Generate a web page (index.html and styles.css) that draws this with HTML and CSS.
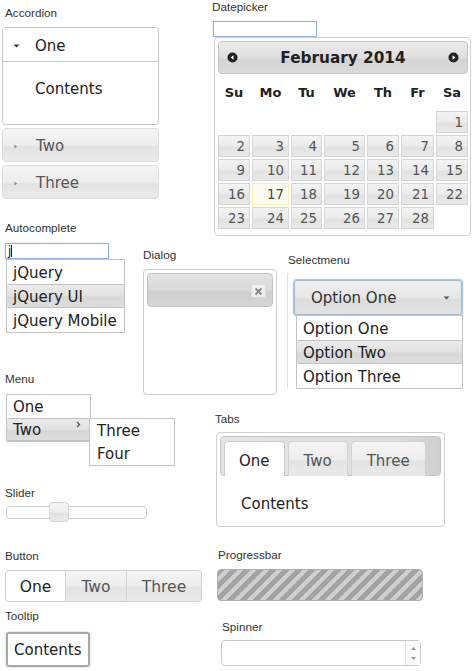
FILE: index.html
```html
<!DOCTYPE html>
<html>
<head>
<meta charset="utf-8">
<link rel="stylesheet" href="styles.css">
</head>
<body>
<div class="page">
  <div class="col-left">
    <section class="sec-accordion">
      <div class="label">Accordion</div>
      <div class="accordion">
        <div class="acc-open">
          <div class="acc-head acc-active"><span class="acc-icon"><svg width="7" height="4" viewBox="0 0 7 4"><path d="M0.5 0.5h6L3.5 3.5z" fill="#333"/></svg></span>One</div>
          <div class="acc-body">Contents</div>
        </div>
        <div class="acc-head acc-closed state-default"><span class="acc-icon"><svg width="7" height="7" viewBox="0 0 7 7"><path d="M2.5 1.5v4l2.5-2z" fill="#888"/></svg></span>Two</div>
        <div class="acc-head acc-closed state-default"><span class="acc-icon"><svg width="7" height="7" viewBox="0 0 7 7"><path d="M2.5 1.5v4l2.5-2z" fill="#888"/></svg></span>Three</div>
      </div>
    </section>

    <div class="row-ac">
      <section class="sec-autocomplete">
        <div class="label">Autocomplete</div>
        <div class="text-input ac-input"><span class="ac-text">j</span><span class="caret"></span></div>
        <ul class="menu ac-menu">
          <li class="menu-item tall">jQuery</li>
          <li class="menu-item tall state-hover">jQuery UI</li>
          <li class="menu-item tall">jQuery Mobile</li>
        </ul>
      </section>
      <section class="sec-dialog">
        <div class="label">Dialog</div>
        <div class="dialog">
          <div class="dialog-title">
            <span class="dialog-close"><svg width="9" height="9" viewBox="0 0 9 9"><path d="M1.5 1.5l6 6M7.5 1.5l-6 6" stroke="#8a8a8a" stroke-width="2"/></svg></span>
          </div>
        </div>
      </section>
    </div>

    <section class="sec-menu">
      <div class="label">Menu</div>
      <ul class="menu main-menu">
        <li class="menu-item">One</li>
        <li class="menu-item state-hover has-sub">Two
          <svg class="sub-arrow" width="5" height="7" viewBox="0 0 5 7"><path d="M1 1l2.5 2.5L1 6" fill="none" stroke="#555" stroke-width="1.3"/></svg>
          <ul class="menu sub-menu">
            <li class="menu-item">Three</li>
            <li class="menu-item">Four</li>
          </ul>
        </li>
      </ul>
    </section>

    <section class="sec-slider">
      <div class="label">Slider</div>
      <div class="slider"><span class="slider-handle state-default"></span></div>
    </section>

    <section class="sec-button">
      <div class="label">Button</div>
      <div class="buttonset">
        <span class="btn btn-active btn-first">One</span>
        <span class="btn state-default btn-two">Two</span>
        <span class="btn state-default btn-last">Three</span>
      </div>
    </section>

    <section class="sec-tooltip">
      <div class="label">Tooltip</div>
      <div class="tooltip">Contents</div>
    </section>
  </div>

  <div class="col-right">
    <section class="sec-datepicker">
      <div class="label">Datepicker</div>
      <div class="text-input dp-input"></div>
      <div class="calendar">
        <div class="cal-header">
          <svg class="cal-nav" width="11" height="11" viewBox="0 0 11 11"><circle cx="5.5" cy="5.5" r="5" fill="#222"/><path d="M3.5 5.5l3-2.2v4.4z" fill="#fff"/></svg>
          <span class="cal-title">February 2014</span>
          <svg class="cal-nav" width="11" height="11" viewBox="0 0 11 11"><circle cx="5.5" cy="5.5" r="5" fill="#222"/><path d="M7.5 5.5l-3-2.2v4.4z" fill="#fff"/></svg>
        </div>
        <div class="cal-grid cal-days">
          <span>Su</span><span>Mo</span><span>Tu</span><span>We</span><span>Th</span><span>Fr</span><span>Sa</span>
        </div>
        <div class="cal-grid cal-dates">
          <span></span><span></span><span></span><span></span><span></span><span></span><span class="d">1</span>
          <span class="d">2</span><span class="d">3</span><span class="d">4</span><span class="d">5</span><span class="d">6</span><span class="d">7</span><span class="d">8</span>
          <span class="d">9</span><span class="d">10</span><span class="d">11</span><span class="d">12</span><span class="d">13</span><span class="d">14</span><span class="d">15</span>
          <span class="d">16</span><span class="d today">17</span><span class="d">18</span><span class="d">19</span><span class="d">20</span><span class="d">21</span><span class="d">22</span>
          <span class="d">23</span><span class="d">24</span><span class="d">25</span><span class="d">26</span><span class="d">27</span><span class="d">28</span><span></span>
        </div>
      </div>
    </section>

    <section class="sec-selectmenu">
      <div class="label">Selectmenu</div>
      <div class="select-wrap">
        <div class="select-button">
          <span>Option One</span>
          <svg width="7" height="4" viewBox="0 0 7 4"><path d="M0.5 0.5h6L3.5 3.5z" fill="#555"/></svg>
        </div>
        <ul class="menu select-menu">
          <li class="menu-item tall">Option One</li>
          <li class="menu-item tall state-hover">Option Two</li>
          <li class="menu-item tall">Option Three</li>
        </ul>
      </div>
    </section>

    <section class="sec-tabs">
      <div class="label">Tabs</div>
      <div class="tabs">
        <div class="tab-bar">
          <span class="tab tab-active">One</span>
          <span class="tab state-default">Two</span>
          <span class="tab state-default">Three</span>
        </div>
        <div class="tab-panel">Contents</div>
      </div>
    </section>

    <section class="sec-progress">
      <div class="label">Progressbar</div>
      <div class="progressbar"></div>
    </section>

    <section class="sec-spinner">
      <div class="label">Spinner</div>
      <div class="spinner">
        <span class="spin-buttons">
          <svg width="7" height="5" viewBox="0 0 7 5"><path d="M1 4h5L3.5 1z" fill="#999"/></svg>
          <svg width="7" height="5" viewBox="0 0 7 5"><path d="M1 1h5L3.5 4z" fill="#999"/></svg>
        </span>
      </div>
    </section>
  </div>
</div>
</body>
</html>
```

FILE: styles.css
```css
* { box-sizing: border-box; }
html, body { margin: 0; padding: 0; background: #fff; }
body {
  width: 474px;
  height: 671px;
  overflow: hidden;
  font-family: "DejaVu Sans", Verdana, sans-serif;
  font-size: 15px;
  color: #222;
}
ul { list-style: none; margin: 0; padding: 0; }

.page { display: flex; align-items: flex-start; }
.col-left { width: 212px; flex: none; display: flex; flex-direction: column; align-items: flex-start; }
.col-right { flex: 1; display: flex; flex-direction: column; align-items: flex-start; }

.label {
  font-family: "Liberation Sans", Arial, sans-serif;
  font-size: 11.7px;
  line-height: 14px;
  height: 14px;
  color: #333;
  white-space: nowrap;
}

.state-default {
  background: linear-gradient(#f5f5f5, #ededed 50%, #e3e3e3 56%, #eaeaea);
  border: 1px solid #d3d3d3;
  color: #555;
}
.state-hover {
  background: linear-gradient(#ebebeb, #e1e1e1 50%, #d7d7d7 56%, #dedede);
  border: 1px solid #b9b9b9;
  color: #222;
}

/* Accordion */
.sec-accordion { margin-top: 6px; }
.sec-accordion .label { margin-left: 5px; }
.accordion { margin: 7px 0 0 2px; width: 157px; }
.acc-open { border: 1px solid #c8c8c8; border-radius: 4px; overflow: hidden; }
.acc-head { display: flex; align-items: center; padding-left: 10px; padding-top: 2px; }
.acc-icon { width: 7px; margin-right: 15px; display: flex; align-items: center; }
.acc-active { height: 34px; border-bottom: 1px solid #c8c8c8; background: #fff; color: #222; }
.acc-body { height: 62px; padding: 18px 0 0 32px; line-height: 18px; color: #222; }
.acc-closed { height: 34px; margin-top: 3px; border-radius: 4px; border-color: #dcdcdc; color: #555; padding-left: 9px; }
.acc-closed .acc-icon { margin-right: 17px; }

/* Autocomplete + Dialog row */
.row-ac { display: flex; align-items: flex-start; height: 151px; margin-top: 22px; }
.sec-autocomplete { margin-left: 5px; width: 138px; }
.text-input { border: 1px solid #8db2e3; background: #fff; box-shadow: 0 0 1px #b7cfee; }
.ac-input { margin-top: 8px; width: 104px; height: 16px; display: flex; align-items: center; padding-left: 2px; font-size: 12px; line-height: 14px; }
.ac-text { color: #222; }
.caret { display: inline-block; width: 1px; height: 12px; background: #222; }

.menu { border: 1px solid #c5c5c5; background: #fff; }
.menu-item { height: 23px; line-height: 19px; padding-top: 2px; border: 1px solid transparent; padding-left: 5px; white-space: nowrap; color: #222; }
.menu-item.tall { height: 24px; line-height: 20px; }
.menu-item.state-hover { border-color: #c2c2c2; border-left-color: transparent; border-right-color: transparent; }
.ac-menu { margin-left: 1px; width: 119px; }

.sec-dialog { margin-top: 27px; }
.dialog { margin-top: 7px; width: 134px; height: 126px; border: 1px solid #cfcfcf; border-radius: 4px; padding: 3px; }
.dialog-title {
  height: 34px;
  border: 1px solid #c4c4c4;
  border-radius: 4px;
  background: linear-gradient(#e3e3e3, #d9d9d9 50%, #cfcfcf 56%, #d6d6d6);
  display: flex; align-items: center; justify-content: flex-end; padding: 2px 6px 0 0;
}
.dialog-close {
  width: 15px; height: 14px; border: 1px solid #dcdcdc; border-radius: 2px; background: #efefef;
  display: flex; align-items: center; justify-content: center;
}

/* Menu */
.sec-menu .label { margin-left: 5px; }
.main-menu { margin: 8px 0 0 6px; width: 85px; }
.has-sub { position: relative; }
.sub-arrow { position: absolute; right: 8px; top: 2px; }
.sub-menu { position: absolute; left: 100%; top: -1px; width: 86px; }
.sub-menu .menu-item { padding-left: 6px; }

/* Slider */
.sec-slider { margin-top: 44px; }
.sec-slider .label { margin-left: 5px; }
.slider { position: relative; margin: 6px 0 0 6px; width: 141px; height: 13px; border: 1px solid #cfcfcf; border-radius: 4px; background: #fff; }
.slider-handle { position: absolute; left: 42px; top: -5px; width: 20px; height: 20px; border-radius: 4px; }

/* Button */
.sec-button { margin-top: 30px; }
.sec-button .label { margin-left: 5px; }
.buttonset { display: flex; margin: 7px 0 0 5px; }
.btn { height: 32px; line-height: 30px; padding-top: 1px; text-align: center; font-size: 15.5px; }
.btn-active { background: #fff; border: 1px solid #cdcdcd; color: #222; }
.btn-first { width: 61px; border-radius: 4px 0 0 4px; }
.btn-two { width: 62px; margin-left: -1px; }
.btn-last { width: 76px; margin-left: -1px; border-radius: 0 4px 4px 0; }

/* Tooltip */
.sec-tooltip { margin-top: 7px; }
.sec-tooltip .label { margin-left: 5px; }
.tooltip { margin: 9px 0 0 6px; width: 84px; height: 35px; border: 2px solid #a8a8a8; border-radius: 3px; box-shadow: 0 0 2px #bbb; padding: 1px 0 0 6px; line-height: 31px; color: #222; }

/* Datepicker */
.dp-input { margin: 7px 0 0 1px; width: 104px; height: 16px; }
.calendar {
  margin-left: 2px; width: 257px; height: 199px;
  border: 1px solid #d0d0d0; border-radius: 4px; padding: 3px 2px 6px 3px; background: #fff;
}
.cal-header {
  height: 33px; border: 1px solid #c6c6c6; border-radius: 4px;
  background: linear-gradient(#ebebeb, #dfdfdf 50%, #d4d4d4 56%, #dadada);
  display: flex; align-items: center; justify-content: space-between; padding: 0 8px;
}
.cal-title { font-weight: bold; font-size: 15.3px; color: #222; }
.cal-grid { display: grid; grid-template-columns: 32px 37px 31px 41px 32px 33px 32px; column-gap: 2px; }
.cal-days { height: 37px; align-items: center; font-weight: bold; font-size: 13px; text-align: center; color: #222; }
.cal-dates { grid-auto-rows: 22px; row-gap: 2px; font-size: 13.3px; }
.cal-dates .d {
  background: linear-gradient(#f3f3f3, #ebebeb 50%, #e3e3e3 56%, #e8e8e8);
  border: 1px solid #d5d5d5; color: #555; text-align: right; padding: 1px 4px 0 0; line-height: 19px;
}
.cal-dates .today { background: #fcfbf0; border-color: #f5eeb0; color: #444; }

/* Selectmenu */
.sec-selectmenu { margin: 17px 0 0 76px; }
.select-wrap { margin: 6px 0 0 -1px; border-left: 1px solid #e2e2e2; padding-top: 7px; }
.select-button {
  margin-left: 6px; width: 168px; height: 35px;
  border: 1px solid #a9b9cc; border-radius: 3px;
  box-shadow: 0 0 0 1px #a8c8ee, 0 0 3px #8db6e8;
  background: linear-gradient(#f0f0f0, #e6e6e6 50%, #dcdcdc 56%, #e2e2e2);
  display: flex; align-items: center; justify-content: space-between; padding: 1px 11px 0 16px; color: #333;
}
.select-menu { margin-left: 8px; width: 167px; }

/* Tabs */
.sec-tabs { margin: 23px 0 0 3px; }
.tabs { margin: 6px 0 0 1px; width: 229px; height: 95px; border: 1px solid #cfcfcf; border-radius: 4px; padding: 3px; }
.tab-bar {
  height: 40px; border: 1px solid #c4c4c4; border-radius: 4px;
  background: linear-gradient(90deg, #e4e4e4, #dcdcdc 80%, #cfcfcf);
  display: flex; align-items: flex-end; padding: 4px 0 0 3px; gap: 3px;
}
.tab { height: 35px; margin-bottom: -1px; line-height: 33px; padding: 3px 15px 0; border-radius: 4px 4px 0 0; border-bottom: none; }
.tab-active { background: #fff; border: 1px solid #cdcdcd; border-bottom: none; color: #222; padding: 3px 14px 0; }
.tab-panel { padding: 19px 0 0 21px; line-height: 18px; color: #222; }

/* Progressbar */
.sec-progress { margin-top: 21px; }
.sec-progress .label { margin-left: 6px; }
.progressbar {
  margin: 7px 0 0 5px; width: 206px; height: 32px; border: 1px solid #b0b0b0; border-radius: 4px;
  background: repeating-linear-gradient(-45deg, #cfcfcf 0, #cfcfcf 4.6px, #a3a3a3 4.6px, #a3a3a3 9.2px);
}

/* Spinner */
.sec-spinner { margin-top: 19px; }
.sec-spinner .label { margin-left: 10px; }
.spinner {
  margin: 6px 0 0 9px; width: 200px; height: 26px; border: 1px solid #c9c9c9; border-radius: 4px;
  display: flex; justify-content: flex-end; background: #fff;
}
.spin-buttons {
  width: 15px; border-left: 1px solid #e2e2e2; display: flex; flex-direction: column;
  align-items: center; justify-content: space-around; padding: 2px 0; background: #fafafa;
}
```
